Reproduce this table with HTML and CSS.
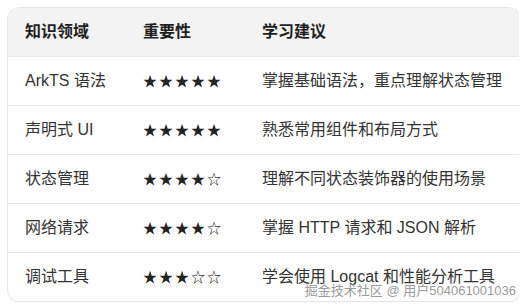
FILE: index.html
```html
<!DOCTYPE html>
<html lang="zh-CN">
<head>
<meta charset="utf-8">
<link rel="stylesheet" href="styles.css">
</head>
<body>
<div class="card">
  <table class="grid">
    <colgroup><col class="c1"><col class="c2"><col class="c3"></colgroup>
    <thead>
      <tr><th>知识领域</th><th>重要性</th><th>学习建议</th></tr>
    </thead>
    <tbody>
      <tr><td>ArkTS 语法</td><td class="stars">★★★★★</td><td>掌握基础语法，重点理解状态管理</td></tr>
      <tr><td>声明式 UI</td><td class="stars">★★★★★</td><td>熟悉常用组件和布局方式</td></tr>
      <tr><td>状态管理</td><td class="stars">★★★★☆</td><td>理解不同状态装饰器的使用场景</td></tr>
      <tr><td>网络请求</td><td class="stars">★★★★☆</td><td>掌握 HTTP 请求和 JSON 解析</td></tr>
      <tr><td>调试工具</td><td class="stars">★★★☆☆</td><td>学会使用 Logcat 和性能分析工具</td></tr>
    </tbody>
  </table>
</div>
<div class="watermark">掘金技术社区 @ 用户504061001036</div>
</body>
</html>
```

FILE: styles.css
```css
html, body {
  background: #ffffff;
}
body {
  margin: 7px;
  font-family: "Liberation Sans", "Noto Sans CJK SC", sans-serif;
  color: #2b2b2b;
  position: relative;
}
.card {
  width: 512px;
  border: 1px solid #e4e4e4;
  border-radius: 12px;
  overflow: hidden;
}
.grid {
  width: 100%;
  border-collapse: collapse;
  table-layout: fixed;
  font-size: 16px;
}
.c1 { width: 118px; }
.c2 { width: 119px; }
.grid th, .grid td {
  height: 48px;
  padding: 0 0 0 17px;
  text-align: left;
  vertical-align: middle;
  white-space: nowrap;
  line-height: 20px;
}
.grid th {
  background: #f3f3f3;
  font-weight: 700;
  color: #1f1f1f;
}
.grid tbody tr td {
  border-top: 1px solid #e6e6e6;
  font-weight: 400;
  color: #333333;
}
.grid td.stars {
  font-family: "Noto Sans CJK SC", sans-serif;
  font-size: 14px;
  letter-spacing: 2px;
  color: #222222;
  height: 45px;
  padding-bottom: 3px;
}
.watermark {
  position: absolute;
  right: 3px;
  top: 276px;
  font-family: "Liberation Sans", "Noto Sans CJK SC", sans-serif;
  font-size: 13px;
  line-height: 16px;
  color: #9a9a9a;
  text-shadow: 0 0 2px #ffffff, 0 0 1px #ffffff;
  white-space: nowrap;
}
```
